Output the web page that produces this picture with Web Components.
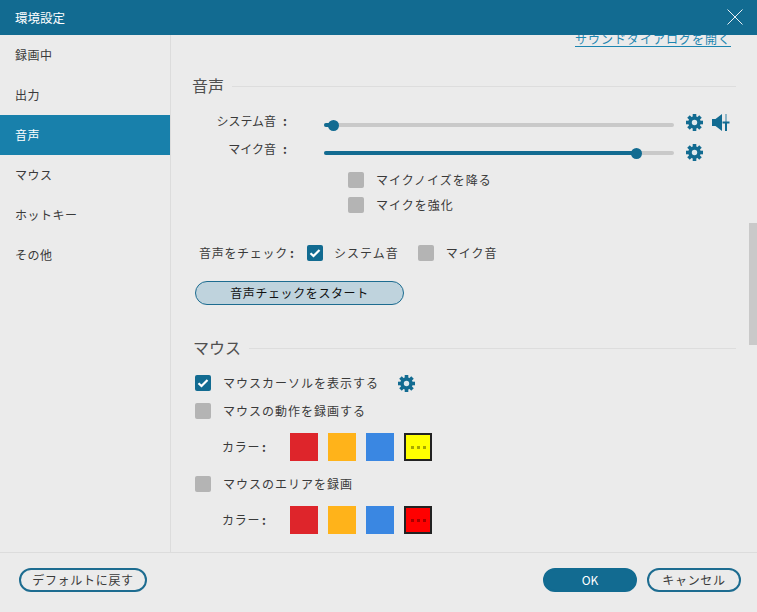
<!DOCTYPE html>
<html lang="ja">
<head>
<meta charset="utf-8">
<title>環境設定</title>
<style>
html,body{margin:0;padding:0;background:#ebebeb}
body{font:12px/16px "Noto Sans CJK JP","Noto Sans",sans-serif;color:#3a3a3a}
.c{margin-left:7px;font-weight:700}
</style>
</head>
<body>
<template id="t-dialog"><style>
:host{display:flex;flex-direction:column;width:757px;height:612px;overflow:hidden;position:relative;background:#ebebeb}
.mid{display:flex;height:517px;overflow:hidden}
.side{width:170px;flex:none;border-right:1px solid #dcdcdc}
.main{flex:1;min-width:0;overflow:hidden;padding:0 21px 0 22px}
.inner{margin-top:-5px}
.thumb{position:absolute;right:0;top:223px;width:8px;height:122px;background:#c9c9c9}
</style>
<slot name="bar"></slot>
<div class="mid"><div class="side"><slot name="side"></slot></div><div class="main"><div class="inner"><slot></slot></div></div></div>
<slot name="foot"></slot>
<div class="thumb"></div></template>

<template id="t-title"><style>
:host{display:flex;align-items:center;justify-content:space-between;height:35px;flex:none;background:#126b91;color:#fff;padding:0 14px 0 15px;box-sizing:border-box;font-size:12.5px}
svg{display:block;margin-top:-1px}
</style><slot></slot><svg width="16" height="16" viewBox="0 0 16 16"><path d="M.5.5l15 15M15.500.5l-15 15" stroke="#e8f0f4" stroke-width="1" fill="none"/></svg></template>

<template id="t-item"><style>
:host{display:flex;align-items:center;height:40px;padding-left:15px;letter-spacing:.5px;box-sizing:border-box}
:host([active]){background:#1880ab;color:#fff}
</style><slot></slot></template>

<template id="t-head"><style>
:host{display:flex;align-items:center;height:24px;box-sizing:border-box;padding-bottom:2px;font-size:16px;color:#505050;gap:8px;margin-left:-1px}
i{flex:1;height:1px;background:#dddddd;margin-top:3px}
</style><slot></slot><i></i></template>

<template id="t-row"><style>
:host{display:flex;align-items:center}
</style><slot></slot></template>

<template id="t-label"><style>
:host{display:block;width:94px;flex:none;text-align:right;margin-bottom:2px;margin-right:37px;white-space:nowrap}
</style><slot></slot></template>

<template id="t-slider"><style>
:host{display:block;position:relative;width:350px;height:4px;flex:none;background:#c9c9c9;border-radius:2px;margin-top:6px}
.f{height:100%;background:#126b91;border-radius:2px}
.k{position:absolute;top:-3.500px;width:11px;height:11px;border-radius:50%;background:#126b91;margin-left:-5.500px}
</style><div class="f"></div><div class="k"></div></template>

<template id="t-gear"><style>
:host{display:block;width:17px;height:17px;flex:none}
svg{display:block}
</style><svg width="17" height="17" viewBox="0 0 17 17" fill="#126b91">
<circle cx="8.500" cy="8.500" r="6.200"/>
<g><rect x="6.700" y="0" width="3.600" height="17"/><rect x="6.700" y="0" width="3.600" height="17" transform="rotate(45 8.500 8.500)"/><rect x="6.700" y="0" width="3.600" height="17" transform="rotate(90 8.500 8.500)"/><rect x="6.700" y="0" width="3.600" height="17" transform="rotate(135 8.500 8.500)"/></g>
<circle cx="8.500" cy="8.500" r="2.700" fill="#dfe9ee"/>
</svg></template>

<template id="t-speaker"><style>
:host{display:block;width:20px;height:17px;flex:none}
svg{display:block}
</style><svg width="20" height="17" viewBox="0 0 20 17" fill="#126b91">
<path d="M0 5h3.500L10 0v17L3.500 12H0z"/>
<rect x="13" y="0" width="2" height="8" fill="#8fb6c8"/>
<rect x="13" y="8" width="2" height="9"/>
<rect x="10.500" y="7.500" width="7" height="2"/>
</svg></template>

<template id="t-check"><style>
:host{display:flex;align-items:center;height:16px;flex:none;gap:12px;white-space:nowrap;letter-spacing:1px}
.b{width:16px;height:16px;border-radius:2px;background:#b4b4b4;flex:none}
:host([on]) .b{background:#126b91}
svg{display:none}
:host([on]) svg{display:block}
</style><div class="b"><svg width="16" height="16" viewBox="0 0 16 16"><path d="M3.500 8.200l3 2.800 6-6" fill="none" stroke="#fff" stroke-width="2.200"/></svg></div><slot></slot></template>

<template id="t-swatch"><style>
:host{display:flex;align-items:center;justify-content:center;gap:3px;width:28px;height:28px;flex:none;box-sizing:border-box;background:var(--c)}
:host([more]){border:2px solid #222}
i{display:none;width:3px;height:3px;background:var(--d)}
:host([more]) i{display:block}
</style><i></i><i></i><i></i></template>

<template id="t-pill"><style>
:host{display:flex;align-items:center;justify-content:center;box-sizing:border-box;height:24px;border:2px solid #1d6c90;border-radius:12px;white-space:nowrap;letter-spacing:.7px;flex:none}
:host([primary]){background:#126b91;border-color:#126b91;color:#fff;letter-spacing:0}
:host([soft]){background:#bfd3dd;border-width:1px;color:#111;letter-spacing:.6px}
</style><slot></slot></template>

<template id="t-foot"><style>
:host{display:flex;align-items:center;height:60px;box-sizing:border-box;border-top:1px solid #dcdcdc;padding:0 16px 5px 19px;flex:none;gap:10px}
.s{flex:1}
</style><slot name="l"></slot><div class="s"></div><slot></slot></template>

<template id="t-link"><style>
:host{display:block;width:max-content;margin:0 5px 0 auto;color:#1c85b0;border-bottom:1px solid #1c85b0;letter-spacing:1px;line-height:14px;padding-top:2px}
</style><slot></slot></template>

<x-dialog>
  <x-title slot="bar">環境設定</x-title>

  <x-item slot="side">録画中</x-item>
  <x-item slot="side">出力</x-item>
  <x-item slot="side" active>音声</x-item>
  <x-item slot="side">マウス</x-item>
  <x-item slot="side">ホットキー</x-item>
  <x-item slot="side">その他</x-item>

  <x-link>サウンドダイアログを開く</x-link>

  <x-head style="margin-top:27px">音声</x-head>

  <x-row style="margin-top:12px;height:24px">
    <x-label>システム音<span class="c">:</span></x-label>
    <x-slider v="9.500"></x-slider>
    <x-gear style="margin-left:12px"></x-gear>
    <x-speaker style="margin-left:9px"></x-speaker>
  </x-row>
  <x-row style="margin-top:4px;height:24px">
    <x-label>マイク音<span class="c">:</span></x-label>
    <x-slider v="312"></x-slider>
    <x-gear style="margin-left:12px;margin-top:4px"></x-gear>
  </x-row>

  <x-check style="margin:10px 0 0 155px">マイクノイズを降る</x-check>
  <x-check style="margin:9px 0 0 155px">マイクを強化</x-check>

  <x-row style="margin:32px 0 0 6px;height:16px">
    <span style="width:108px;flex:none;letter-spacing:.7px">音声をチェック<span class="c" style="margin-left:2px">:</span></span>
    <x-check on style="gap:11px">システム音</x-check>
    <x-check style="margin-left:19px">マイク音</x-check>
  </x-row>

  <x-pill soft style="margin:20px 0 0 2px;width:209px">音声チェックをスタート</x-pill>

  <x-head style="margin:31px 0 0 0">マウス</x-head>

  <x-row style="margin:15px 0 0 2px;height:16px">
    <x-check on>マウスカーソルを表示する</x-check>
    <x-gear style="margin-left:19px"></x-gear>
  </x-row>
  <x-check style="margin:12px 0 0 2px">マウスの動作を録画する</x-check>

  <x-row style="margin:14px 0 0 29px;gap:10px">
    <span style="width:58px;flex:none;letter-spacing:.7px">カラー<span class="c" style="margin-left:2px">:</span></span>
    <x-swatch style="--c:#de252b"></x-swatch>
    <x-swatch style="--c:#ffb31a"></x-swatch>
    <x-swatch style="--c:#3a87e2"></x-swatch>
    <x-swatch more style="--c:#ffff00;--d:#a8a800"></x-swatch>
  </x-row>

  <x-check style="margin:15px 0 0 2px">マウスのエリアを録画</x-check>

  <x-row style="margin:14px 0 0 29px;gap:10px">
    <span style="width:58px;flex:none;letter-spacing:.7px">カラー<span class="c" style="margin-left:2px">:</span></span>
    <x-swatch style="--c:#de252b"></x-swatch>
    <x-swatch style="--c:#ffb31a"></x-swatch>
    <x-swatch style="--c:#3a87e2"></x-swatch>
    <x-swatch more style="--c:#ff0000;--d:#a80000"></x-swatch>
  </x-row>

  <x-foot slot="foot">
    <x-pill slot="l" style="width:128px">デフォルトに戻す</x-pill>
    <x-pill primary style="width:94px">OK</x-pill>
    <x-pill style="width:94px">キャンセル</x-pill>
  </x-foot>
</x-dialog>

<script>
class Base extends HTMLElement{
  constructor(){
    super();
    const id=this.constructor.tpl;
    this.attachShadow({mode:"open"}).appendChild(document.getElementById(id).content.cloneNode(true));
  }
}
const reg=(name,tpl,extra)=>{
  const C=class extends Base{static get tpl(){return tpl}};
  if(extra) C.prototype.connectedCallback=extra;
  customElements.define(name,C);
};
reg("x-dialog","t-dialog");
reg("x-title","t-title");
reg("x-item","t-item");
reg("x-head","t-head");
reg("x-row","t-row");
reg("x-label","t-label");
reg("x-slider","t-slider",function(){
  const v=this.getAttribute("v")+"px";
  this.shadowRoot.querySelector(".f").style.width=v;
  this.shadowRoot.querySelector(".k").style.left=v;
});
reg("x-gear","t-gear");
reg("x-speaker","t-speaker");
reg("x-check","t-check");
reg("x-swatch","t-swatch");
reg("x-pill","t-pill");
reg("x-foot","t-foot");
reg("x-link","t-link");
</script>
</body>
</html>
